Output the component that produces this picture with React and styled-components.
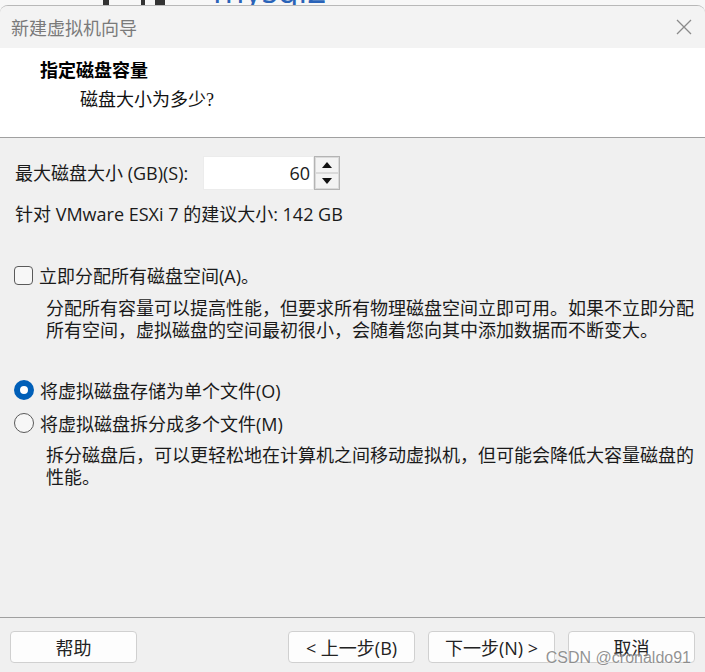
import styled, { createGlobalStyle } from "styled-components";

const GlobalStyle = createGlobalStyle`
    html, body {
        margin: 0;
        padding: 0;
        background: #f7f7f7;
    }
    * {
        box-sizing: border-box;
    }
`;

const ui = `"Open Sans", "Noto Sans CJK SC", sans-serif`;

const Screen = styled.div`
    position: relative;
    width: 705px;
    height: 672px;
    display: flex;
    flex-direction: column;
    overflow: hidden;
    font-family: ${ui};
    color: #1a1a1a;
`;

// 뒤에 깔린 다른 창의 일부
const Backdrop = styled.div`
    height: 5px;
    overflow: hidden;
    display: flex;
    align-items: flex-start;
    padding-left: 103px;
    background: #f7f7f7;
`;

const BackBar = styled.div`
    width: ${(p) => p.$w}px;
    height: 5px;
    margin-right: ${(p) => p.$gap}px;
    background: #333;
`;

const BackText = styled.div`
    margin-top: -27px;
    font-family: "Open Sans", sans-serif;
    font-size: 34px;
    line-height: 34px;
    color: #2a63b8;
`;

const Dialog = styled.div`
    flex: 1;
    display: flex;
    flex-direction: column;
    background: #f0f0f0;
    border-top: 1px solid #b8b8b8;
    border-radius: 8px 8px 0 0;
    overflow: hidden;
`;

const TitleBar = styled.div`
    height: 42px;
    flex-shrink: 0;
    display: flex;
    align-items: center;
    justify-content: space-between;
    padding: 0 12px 0 11px;
    background: #f3f3f3;
`;

const Title = styled.div`
    font-family: "Noto Sans CJK SC", sans-serif;
    font-size: 18px;
    color: #7a7a7a;
`;

const Header = styled.div`
    height: 90px;
    flex-shrink: 0;
    padding: 12px 0 0 40px;
    background: #ffffff;
    border-bottom: 1px solid #a0a0a0;
    font-family: "Liberation Serif", "Noto Sans CJK SC", serif;
`;

const HeadTitle = styled.div`
    font-size: 18px;
    line-height: 22px;
    font-weight: 700;
    color: #000;
`;

const HeadSub = styled.div`
    margin-top: 7px;
    padding-left: 40px;
    font-size: 18px;
    line-height: 22px;
    color: #111;
`;

const Body = styled.div`
    flex: 1;
    padding: 18px 15px 0 15px;
    font-size: 18px;
`;

const SizeRow = styled.div`
    display: flex;
    align-items: center;
    height: 34px;
`;

const Label = styled.div`
    width: 188px;
    line-height: 22px;
`;

const NumberBox = styled.div`
    display: flex;
    width: 111px;
    height: 34px;
    align-items: center;
    justify-content: flex-end;
    padding-right: 3px;
    background: #fff;
    border: 1px solid #ececec;
    font-size: 18px;
`;

const Spin = styled.div`
    width: 26px;
    height: 34px;
    display: flex;
    flex-direction: column;
    border: 1px solid #b4b4b4;
    background: #f0f0f0;
`;

const SpinButton = styled.div`
    flex: 1;
    display: flex;
    align-items: center;
    justify-content: center;
    border: 1px solid #dadada;
    background: #f3f3f3;
`;

const Line = styled.div`
    margin-top: ${(p) => p.$mt || 0}px;
    line-height: 22px;
`;

const OptionRow = styled.div`
    display: flex;
    align-items: center;
    gap: 6px;
    height: 22px;
    margin-top: ${(p) => p.$mt}px;
`;

const CheckBox = styled.div`
    width: 19px;
    height: 19px;
    margin-left: -1px;
    border: 1px solid #5a5a5a;
    border-radius: 4px;
    background: #f7f7f7;
`;

const Radio = styled.div`
    width: 20px;
    height: 20px;
    margin-left: -1px;
    border-radius: 50%;
    background: ${(p) => (p.$on ? "#fff" : "#f7f7f7")};
    border: ${(p) => (p.$on ? "6px solid #005fb8" : "1px solid #5a5a5a")};
`;

const Note = styled.div`
    margin-top: ${(p) => p.$mt}px;
    margin-right: -15px;
    padding-left: 31px;
    line-height: 22px;
    font-size: 18px;
    white-space: nowrap;
    color: #1a1a1a;
`;

const Footer = styled.div`
    height: 55px;
    flex-shrink: 0;
    display: flex;
    align-items: flex-start;
    padding: 13px 10px 0 10px;
    border-top: 1px solid #a0a0a0;
`;

const Spacer = styled.div`
    flex: 1;
`;

const ButtonGroup = styled.div`
    display: flex;
    gap: 13px;
`;

const Button = styled.div`
    width: 127px;
    height: 32px;
    display: flex;
    align-items: center;
    justify-content: center;
    background: #fdfdfd;
    border: 1px solid #d0d0d0;
    border-radius: 4px;
    font-size: 18px;
    color: #222;
`;

const Watermark = styled.div`
    position: absolute;
    right: 14px;
    bottom: 5px;
    font-family: "Liberation Sans", sans-serif;
    font-size: 16px;
    color: rgba(110, 110, 110, 0.75);
    text-shadow: 0 0 2px #fff;
`;

const Close = () => (
    <svg width="18" height="18" viewBox="0 0 18 18">
        <path d="M2 2 L16 16 M16 2 L2 16" stroke="#8a8a8a" strokeWidth="1.3" fill="none" />
    </svg>
);

const Arrow = ({ up }) => (
    <svg width="10" height="6" viewBox="0 0 10 6">
        <path d={up ? "M5 0 L10 6 L0 6 Z" : "M0 0 L10 0 L5 6 Z"} fill="#111" />
    </svg>
);

export default function App() {
    return (
        <>
            <GlobalStyle />
            <Screen>
                <Backdrop>
                    <BackBar $w={6} $gap={32} />
                    <BackBar $w={4} $gap={10} />
                    <BackBar $w={10} $gap={48} />
                    <BackText>mysql2</BackText>
                </Backdrop>
                <Dialog>
                    <TitleBar>
                        <Title>新建虚拟机向导</Title>
                        <Close />
                    </TitleBar>
                    <Header>
                        <HeadTitle>指定磁盘容量</HeadTitle>
                        <HeadSub>磁盘大小为多少?</HeadSub>
                    </Header>
                    <Body>
                        <SizeRow>
                            <Label>最大磁盘大小 (GB)(S):</Label>
                            <NumberBox>60</NumberBox>
                            <Spin>
                                <SpinButton>
                                    <Arrow up />
                                </SpinButton>
                                <SpinButton>
                                    <Arrow />
                                </SpinButton>
                            </Spin>
                        </SizeRow>
                        <Line $mt={13}>针对 VMware ESXi 7 的建议大小: 142 GB</Line>

                        <OptionRow $mt={39}>
                            <CheckBox />
                            <span>立即分配所有磁盘空间(A)。</span>
                        </OptionRow>
                        <Note $mt={11}>
                            分配所有容量可以提高性能，但要求所有物理磁盘空间立即可用。如果不立即分配
                            <br />
                            所有空间，虚拟磁盘的空间最初很小，会随着您向其中添加数据而不断变大。
                        </Note>

                        <OptionRow $mt={38}>
                            <Radio $on />
                            <span>将虚拟磁盘存储为单个文件(O)</span>
                        </OptionRow>
                        <OptionRow $mt={11}>
                            <Radio />
                            <span>将虚拟磁盘拆分成多个文件(M)</span>
                        </OptionRow>
                        <Note $mt={10}>
                            拆分磁盘后，可以更轻松地在计算机之间移动虚拟机，但可能会降低大容量磁盘的
                            <br />
                            性能。
                        </Note>
                    </Body>
                    <Footer>
                        <Button>帮助</Button>
                        <Spacer />
                        <ButtonGroup>
                            <Button>&lt; 上一步(B)</Button>
                            <Button>下一步(N) &gt;</Button>
                            <Button>取消</Button>
                        </ButtonGroup>
                    </Footer>
                </Dialog>
                <Watermark>CSDN @cronaldo91</Watermark>
            </Screen>
        </>
    );
}
